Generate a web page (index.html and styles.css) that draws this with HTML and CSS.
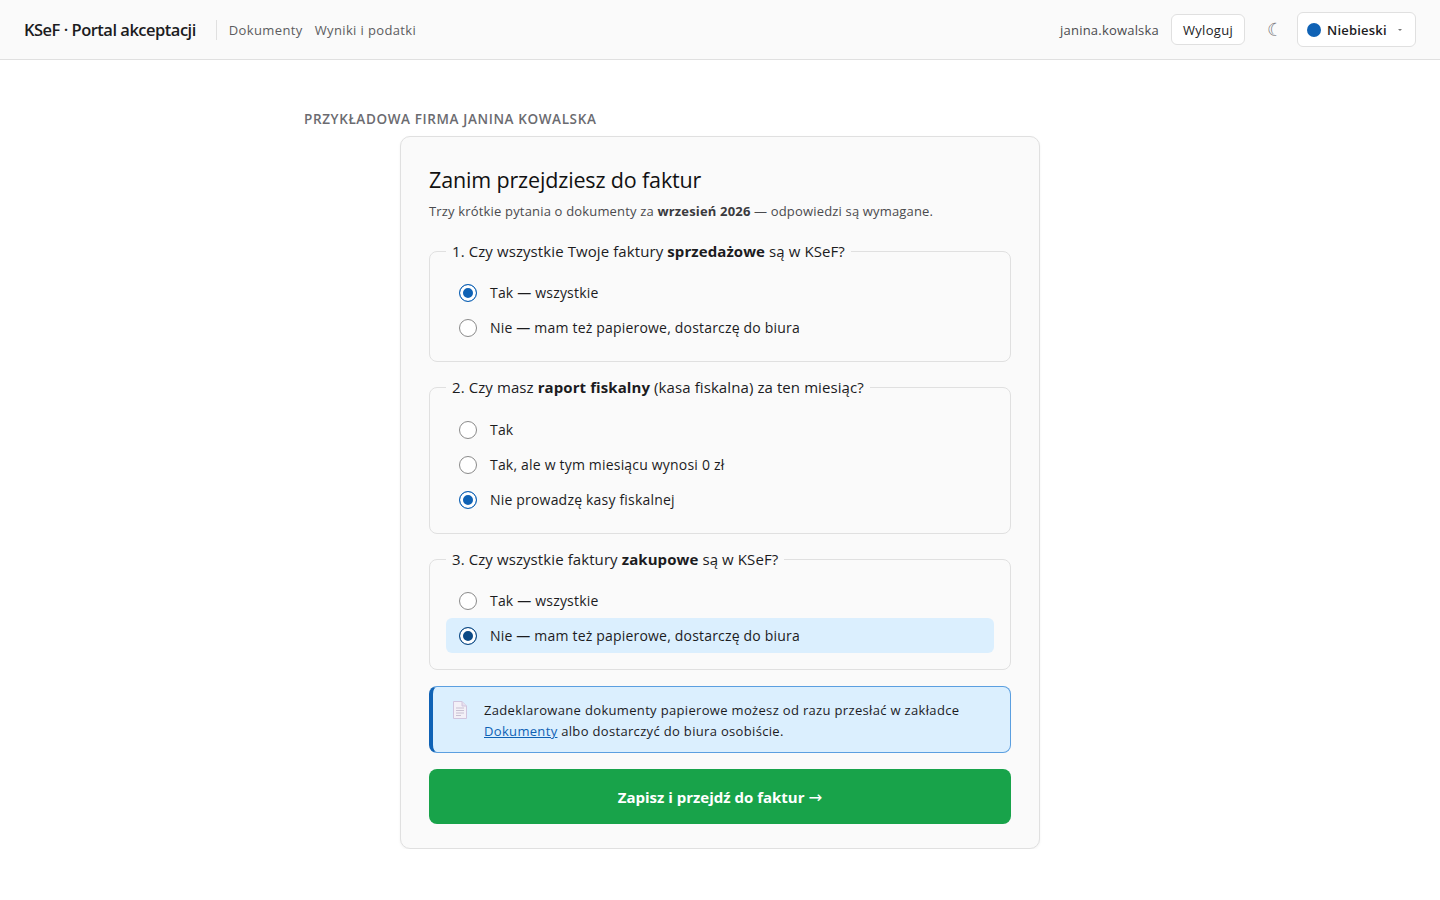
FILE: index.html
```html
<!DOCTYPE html>
<html lang="pl">
<head>
    <meta charset="UTF-8">
    <meta name="viewport" content="width=device-width, initial-scale=1.0">
    <title>KSeF · Portal akceptacji</title>
    <link rel="stylesheet" href="styles.css">
</head>
<body>
    <header class="topbar">
        <div class="brand">KSeF · Portal akceptacji</div>
        <nav class="nav">
            <a href="#">Dokumenty</a>
            <a href="#">Wyniki i podatki</a>
        </nav>
        <div class="user-box">
            <span class="user-name">janina.kowalska</span>
            <button class="logout-btn" type="button">Wyloguj</button>
            <span class="moon">☾</span>
            <button class="theme-btn" type="button">
                <span class="theme-dot"></span>
                <span class="theme-name">Niebieski</span>
                <span class="theme-caret"></span>
            </button>
        </div>
    </header>

    <main class="main">
        <div class="company">PRZYKŁADOWA FIRMA JANINA KOWALSKA</div>

        <form class="card">
            <h1>Zanim przejdziesz do faktur</h1>
            <p class="subtitle">Trzy krótkie pytania o dokumenty za <b>wrzesień 2026</b> — odpowiedzi są wymagane.</p>

            <fieldset class="question">
                <legend>1. Czy wszystkie Twoje faktury <b>sprzedażowe</b> są w KSeF?</legend>
                <label class="option"><input type="radio" name="q1" checked> Tak — wszystkie</label>
                <label class="option"><input type="radio" name="q1"> Nie — mam też papierowe, dostarczę do biura</label>
            </fieldset>

            <fieldset class="question">
                <legend>2. Czy masz <b>raport fiskalny</b> (kasa fiskalna) za ten miesiąc?</legend>
                <label class="option"><input type="radio" name="q2"> Tak</label>
                <label class="option"><input type="radio" name="q2"> Tak, ale w tym miesiącu wynosi 0 zł</label>
                <label class="option"><input type="radio" name="q2" checked> Nie prowadzę kasy fiskalnej</label>
            </fieldset>

            <fieldset class="question">
                <legend>3. Czy wszystkie faktury <b>zakupowe</b> są w KSeF?</legend>
                <label class="option"><input type="radio" name="q3"> Tak — wszystkie</label>
                <label class="option option-active"><input type="radio" name="q3" checked> Nie — mam też papierowe, dostarczę do biura</label>
            </fieldset>

            <div class="notice">
                <svg class="notice-icon" width="18" height="20" viewBox="0 0 18 20">
                    <path d="M2.5 1.5h8.5l4.5 4.5v12.5h-13z" fill="#f3f0f7" stroke="#d0c4de"/>
                    <path d="M11 1.5v4.5h4.5" fill="#e6e0ed" stroke="#d0c4de"/>
                    <path d="M5 8h8M5 10.5h8M5 13h8M5 15.5h5" stroke="#c8c0d2"/>
                </svg>
                <div class="notice-text">Zadeklarowane dokumenty papierowe możesz od razu przesłać w zakładce<br><a href="#">Dokumenty</a> albo dostarczyć do biura osobiście.</div>
            </div>

            <button class="submit-btn" type="button">Zapisz i przejdź do faktur <span class="arrow">→</span></button>
        </form>
    </main>
</body>
</html>
```

FILE: styles.css
```css
* {
    box-sizing: border-box;
}

body {
    font-family: 'Open Sans', 'Noto Sans', sans-serif;
    font-size: 14px;
    color: #1c1c1e;
    background-color: #fff;
    margin: 0;
}

.topbar {
    display: flex;
    align-items: center;
    height: 60px;
    padding: 0 24px;
    background-color: #fafafa;
    border-bottom: 1px solid #e0e0e0;
}

.brand {
    font-size: 16.5px;
    font-weight: 600;
    letter-spacing: -0.5px;
    padding-right: 20px;
    margin-right: 12px;
    border-right: 1px solid #e0e0e0;
    line-height: 20px;
}

.nav {
    display: flex;
    gap: 12px;
    font-size: 13px;
    letter-spacing: 0.37px;
}

.nav a {
    color: #5c5c60;
    text-decoration: none;
}

.user-box {
    display: flex;
    align-items: center;
    margin-left: auto;
    font-size: 13px;
}

.user-name {
    color: #4a4a4e;
    margin-right: 12px;
    letter-spacing: 0.2px;
}

.logout-btn {
    font: inherit;
    letter-spacing: 0.3px;
    color: #1c1c1e;
    height: 31px;
    padding: 0 11px;
    background-color: #fff;
    border: 1px solid #e0e0e0;
    border-radius: 6px;
}

.moon {
    width: 18px;
    margin: 0 13px 0 21px;
    font-size: 18px;
    color: #77777a;
    text-align: center;
    position: relative;
    top: -1px;
}

.theme-btn {
    display: flex;
    align-items: center;
    font: inherit;
    font-weight: 600;
    letter-spacing: 0.2px;
    color: #1c1c1e;
    height: 35px;
    width: 119px;
    padding: 0 10px 0 9px;
    background-color: #fff;
    border: 1px solid #e0e0e0;
    border-radius: 6px;
}

.theme-dot {
    width: 14px;
    height: 14px;
    margin-right: 6px;
    border-radius: 50%;
    background-color: #0f62b5;
}

.theme-caret {
    margin-left: auto;
    margin-right: 3px;
    border-left: 2px solid transparent;
    border-right: 2px solid transparent;
    border-top: 2px solid #777;
}

.main {
    width: 832px;
    margin: 0 auto;
    padding-top: 50px;
}

.company {
    font-size: 13.5px;
    font-weight: 600;
    letter-spacing: 0.62px;
    color: #6b6b70;
    line-height: 18px;
    margin-bottom: 8px;
}

.card {
    width: 640px;
    margin: 0 auto;
    padding: 28px 28px 24px;
    background-color: #fafafa;
    border: 1px solid #e0e0e0;
    border-radius: 10px;
    box-shadow: 0 1px 3px rgba(0, 0, 0, 0.05);
}

h1 {
    font-size: 21.5px;
    font-weight: 500;
    letter-spacing: -0.15px;
    line-height: 30px;
    color: #111;
    margin: 0 0 6px;
}

.subtitle {
    font-size: 13px;
    letter-spacing: 0.17px;
    line-height: 20px;
    color: #4a4a4e;
    margin: 0 0 19.8px;
}

.subtitle b {
    color: #3a3a3e;
}

.question {
    display: flex;
    flex-direction: column;
    min-width: 0;
    margin: 0 0 14.9px;
    padding: 13.6px 16px 16px;
    border: 1px solid #e0e0e0;
    border-radius: 8px;
}

.question legend {
    font-size: 15px;
    line-height: 21px;
    font-weight: 500;
    padding: 0 6px;
    letter-spacing: 0.09px;
}

.question legend b {
    font-weight: 700;
}

.option {
    display: flex;
    align-items: center;
    gap: 13px;
    height: 35px;
    padding: 0 13px;
    font-size: 14px;
    letter-spacing: 0.19px;
    border-radius: 6px;
}

.option-active {
    background-color: #dbeffe;
}

.option input {
    appearance: none;
    width: 18px;
    height: 18px;
    margin: 1px 0 0;
    background-color: #fff;
    border: 1px solid #8a8a8a;
    border-radius: 50%;
}

.option input:checked {
    background-color: #0f62b5;
    border-color: #0f62b5;
    box-shadow: inset 0 0 0 3px #fff;
}

.option-active input:checked {
    background-color: #0d4a85;
    border-color: #0d4a85;
}

.notice {
    display: flex;
    gap: 15px;
    margin-top: 16px;
    padding: 13px 18px 10px;
    font-size: 13px;
    line-height: 21px;
    letter-spacing: 0.33px;
    background-color: #dbeffe;
    border: 1px solid #5b9fe0;
    border-left: 4px solid #0f62b5;
    border-radius: 8px;
}

.notice-icon {
    flex: none;
}

.notice a {
    color: #0f62b5;
}

.submit-btn {
    display: block;
    width: 100%;
    height: 55px;
    margin-top: 16px;
    font: inherit;
    font-size: 15px;
    font-weight: 700;
    color: #fff;
    background-color: #18a34a;
    border: 0;
    border-radius: 8px;
}

.arrow {
    font-family: 'DejaVu Sans', sans-serif;
    font-weight: 400;
    font-size: 16.5px;
    line-height: 1;
}
```
